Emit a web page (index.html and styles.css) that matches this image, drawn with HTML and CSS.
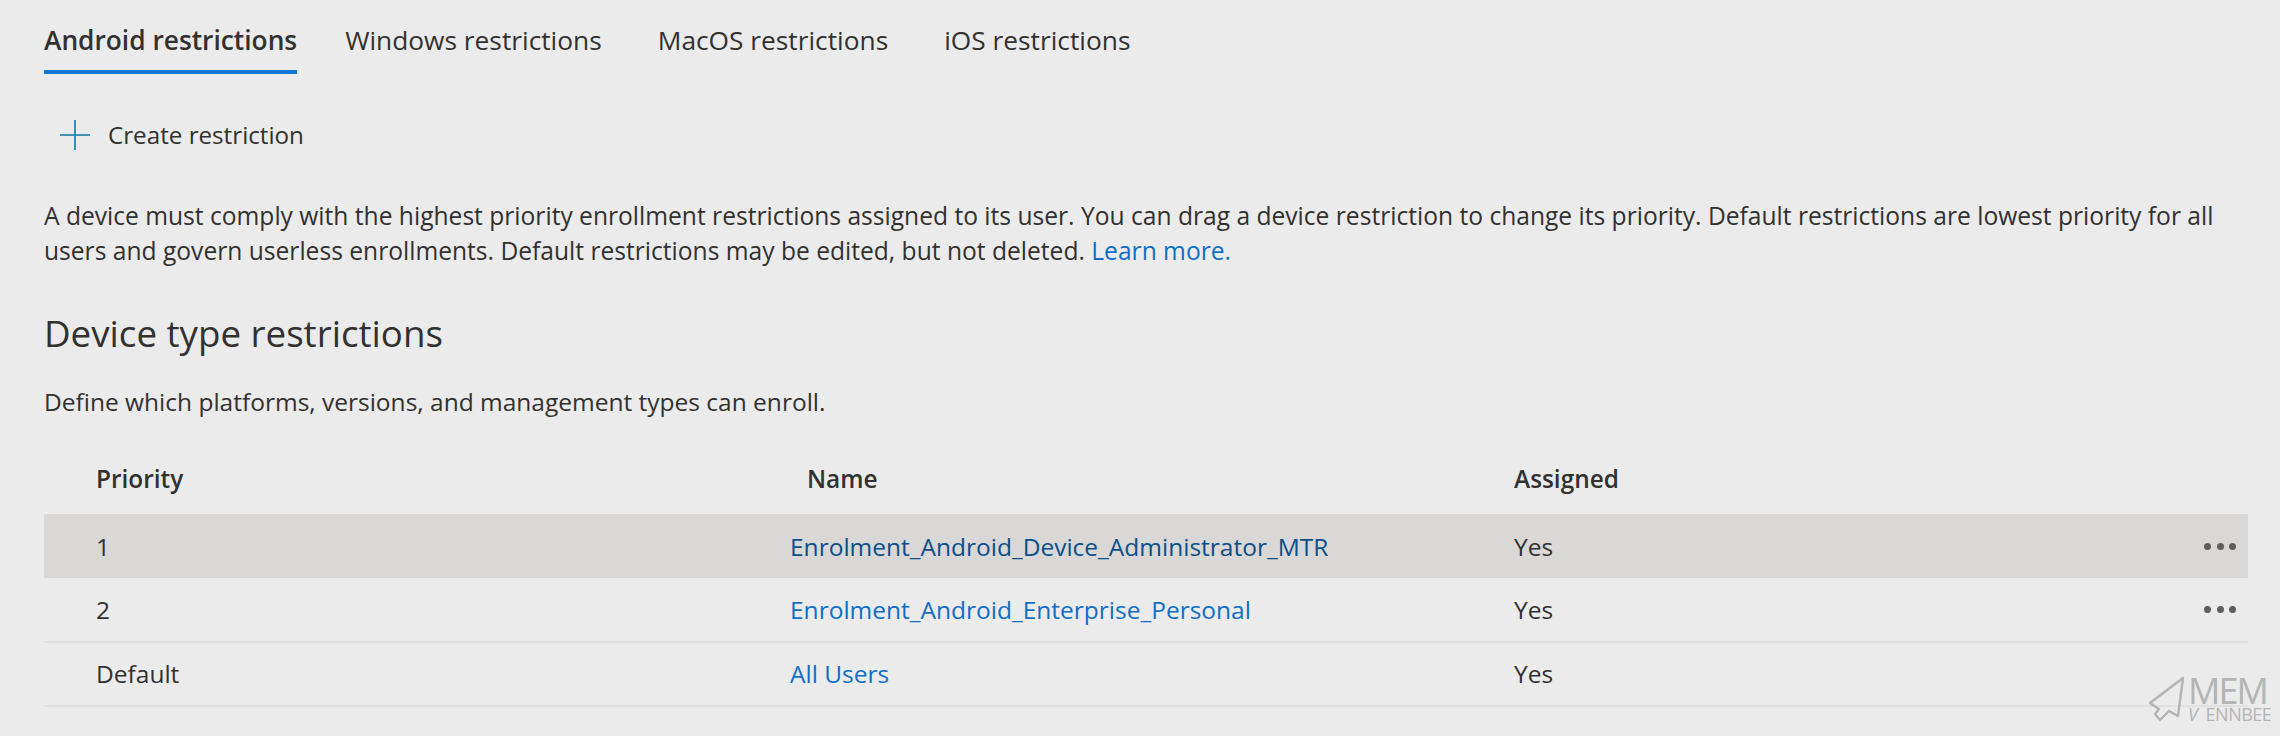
FILE: index.html
```html
<!DOCTYPE html>
<html lang="en">
<head>
  <meta charset="UTF-8">
  <title>Enrollment restrictions</title>
  <link rel="stylesheet" href="styles.css">
</head>
<body>
  <nav class="tabs">
    <a class="tab active">Android restrictions</a>
    <a class="tab">Windows restrictions</a>
    <a class="tab">MacOS restrictions</a>
    <a class="tab">iOS restrictions</a>
  </nav>

  <button class="create" type="button">
    <svg width="30" height="30" viewBox="0 0 30 30"><path d="M0 15H30M15 0V30" stroke="#0f78a8" stroke-width="1.6" fill="none"/></svg>
    Create restriction
  </button>

  <p class="intro">A device must comply with the highest priority enrollment restrictions assigned to its user. You can drag a device restriction to change its priority. Default restrictions are lowest priority for all users and govern userless enrollments. Default restrictions may be edited, but not deleted. <a href="#">Learn more.</a></p>

  <h2>Device type restrictions</h2>
  <p class="sub">Define which platforms, versions, and management types can enroll.</p>

  <div class="table">
    <div class="row head">
      <span>Priority</span>
      <span class="name-head">Name</span>
      <span>Assigned</span>
    </div>
    <div class="row selected">
      <span>1</span>
      <a href="#">Enrolment_Android_Device_Administrator_MTR</a>
      <span>Yes</span>
      <span class="dots"><i></i><i></i><i></i></span>
    </div>
    <div class="row lined">
      <span>2</span>
      <a href="#">Enrolment_Android_Enterprise_Personal</a>
      <span>Yes</span>
      <span class="dots"><i></i><i></i><i></i></span>
    </div>
    <div class="row lined">
      <span>Default</span>
      <a href="#">All Users</a>
      <span>Yes</span>
    </div>
  </div>

  <div class="mark">
    <svg width="38" height="46" viewBox="0 0 38 46"><path d="M35 2 2 27 11 33 7 38 12 44 21 35 30 40Z" fill="none" stroke="#b4b4b4" stroke-width="2.4" stroke-linejoin="round"/></svg>
    <div class="mark-text">
      <b>MEM</b>
      <small><em>V</em> ENNBEE</small>
    </div>
  </div>
</body>
</html>
```

FILE: styles.css
```css
html, body {
  height: 100%;
}
body {
  margin: 0;
  padding: 0 32px 0 44px;
  background: #ebebeb;
  color: #323130;
  font-family: "Open Sans", "Noto Sans", sans-serif;
  font-size: 24.5px;
  overflow: hidden;
  position: relative;
  box-sizing: border-box;
}
a {
  color: #0f6fc6;
  text-decoration: none;
}
.tabs {
  display: flex;
  gap: 56px;
  height: 74px;
  align-items: flex-start;
}
.tab {
  color: #323130;
  font-size: 26.3px;
  line-height: 34px;
  padding: 23px 0 13px;
}
.tab.active {
  font-weight: 600;
  margin-right: -8px;
  border-bottom: 4px solid #0f78d4;
}
.create {
  display: flex;
  align-items: center;
  gap: 18px;
  margin: 46px 0 0 16px;
  padding: 0;
  border: 0;
  background: none;
  color: #323130;
  font: inherit;
  font-size: 24.2px;
  line-height: 30px;
}
.intro {
  margin: 48px 0 0;
  font-size: 24.6px;
  line-height: 35px;
}
h2 {
  margin: 40px 0 0;
  font-size: 36.7px;
  line-height: 50px;
  font-weight: 400;
}
.sub {
  margin: 26px 0 0;
  line-height: 35px;
}
.table {
  margin-top: 23px;
}
.row {
  display: grid;
  grid-template-columns: 694px 724px 1fr 44px;
  align-items: center;
  height: 64px;
  padding-left: 52px;
  box-sizing: border-box;
}
.row .dots {
  grid-column: 4;
}
.head {
  height: 72px;
  font-size: 24.4px;
  font-weight: 600;
}
.name-head {
  padding-left: 17px;
}
.selected {
  background: #d9d8d6;
}
.selected a {
  color: #0b4f8a;
}
.lined {
  height: 64.5px;
  border-bottom: 2px solid #e0e0e0;
}
.dots {
  display: flex;
  gap: 5.5px;
}
.dots i {
  width: 7px;
  height: 7px;
  border-radius: 50%;
  background: #5f5e5d;
}
.mark {
  position: absolute;
  left: 2148px;
  top: 676px;
  display: flex;
  gap: 2px;
  color: #b4b4b4;
}
.mark-text {
  display: flex;
  flex-direction: column;
}
.mark b {
  font-size: 36px;
  line-height: 30px;
  font-weight: 400;
  letter-spacing: -2px;
}
.mark small {
  font-size: 18px;
  line-height: 16px;
  letter-spacing: -0.5px;
  word-spacing: 4px;
}
```
